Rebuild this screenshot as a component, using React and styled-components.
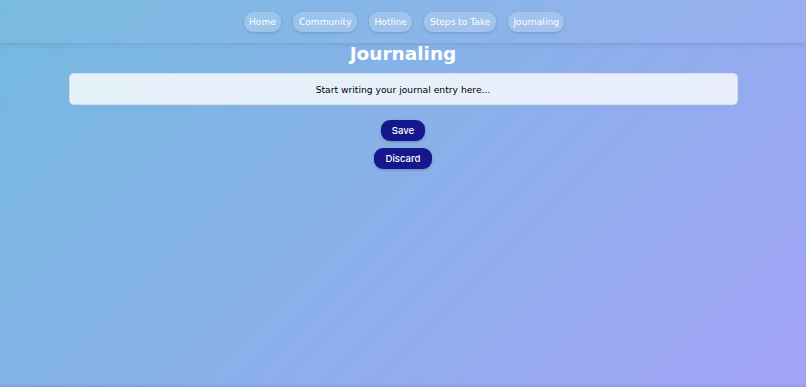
import React from "react";
import styled, { createGlobalStyle } from "styled-components";

const Global = createGlobalStyle`
  html, body { margin: 0; padding: 0; }
  body {
    font-family: "DejaVu Sans", Verdana, sans-serif;
    background: linear-gradient(135deg, #74bade 0%, #8bb0ea 50%, #a3a3f8 100%);
    min-height: 100vh;
  }
  * { box-sizing: border-box; }
`;

const Page = styled.div`
  min-height: 100vh;
  display: flex;
  flex-direction: column;
  align-items: center;
  box-shadow: inset 0 -3px 3px -2px rgba(40, 40, 120, 0.18);
`;

const Header = styled.header`
  width: 100%;
  height: 43px;
  display: flex;
  justify-content: center;
  align-items: center;
  gap: 12px;
  padding-left: 2px;
  background: rgba(255, 255, 255, 0.04);
  box-shadow: 0 2px 4px rgba(30, 60, 120, 0.12);
`;

const NavButton = styled.button`
  height: 20px;
  padding: 0 5.5px;
  border: none;
  border-radius: 9px;
  background: rgba(255, 255, 255, 0.2);
  color: #fff;
  font-family: "DejaVu Sans", Verdana, sans-serif;
  font-size: 9.1px;
  box-shadow: 0 1px 3px rgba(20, 50, 110, 0.2);
  cursor: pointer;
`;

const Title = styled.h1`
  margin: 1px 0 0;
  height: 20px;
  line-height: 20px;
  font-size: 18.5px;
  font-weight: bold;
  color: #fff;
`;

const Entry = styled.textarea`
  margin-top: 9px;
  width: 669px;
  height: 32px;
  border: 1px solid rgba(210, 220, 235, 0.9);
  border-radius: 5px;
  background: rgba(255, 255, 255, 0.8);
  resize: none;
  padding: 10px;
  text-align: center;
  font-family: "DejaVu Sans", Verdana, sans-serif;
  font-size: 9.2px;
  line-height: 11px;
  color: #000;
  &::placeholder { color: #000; }
  outline: none;
`;

const Actions = styled.div`
  margin-top: 15px;
  display: flex;
  flex-direction: column;
  align-items: center;
  gap: 7px;
`;

const ActionButton = styled.button`
  height: 21px;
  padding: 0 ${(p) => p.$pad}px;
  border: none;
  border-radius: 9px;
  background: #16178a;
  color: #fff;
  font-family: Inter, "Noto Sans", sans-serif;
  font-size: 9.6px;
  font-weight: 500;
  box-shadow: 0 1px 3px rgba(10, 10, 60, 0.25);
  cursor: pointer;
`;

const links = ["Home", "Community", "Hotline", "Steps to Take", "Journaling"];

export default function App() {
  return (
    <>
      <Global />
      <Page>
        <Header>
          {links.map((l) => (
            <NavButton key={l}>{l}</NavButton>
          ))}
        </Header>
        <Title>Journaling</Title>
        <Entry placeholder="Start writing your journal entry here..." />
        <Actions>
          <ActionButton $pad={11}>Save</ActionButton>
          <ActionButton $pad={11}>Discard</ActionButton>
        </Actions>
      </Page>
    </>
  );
}
